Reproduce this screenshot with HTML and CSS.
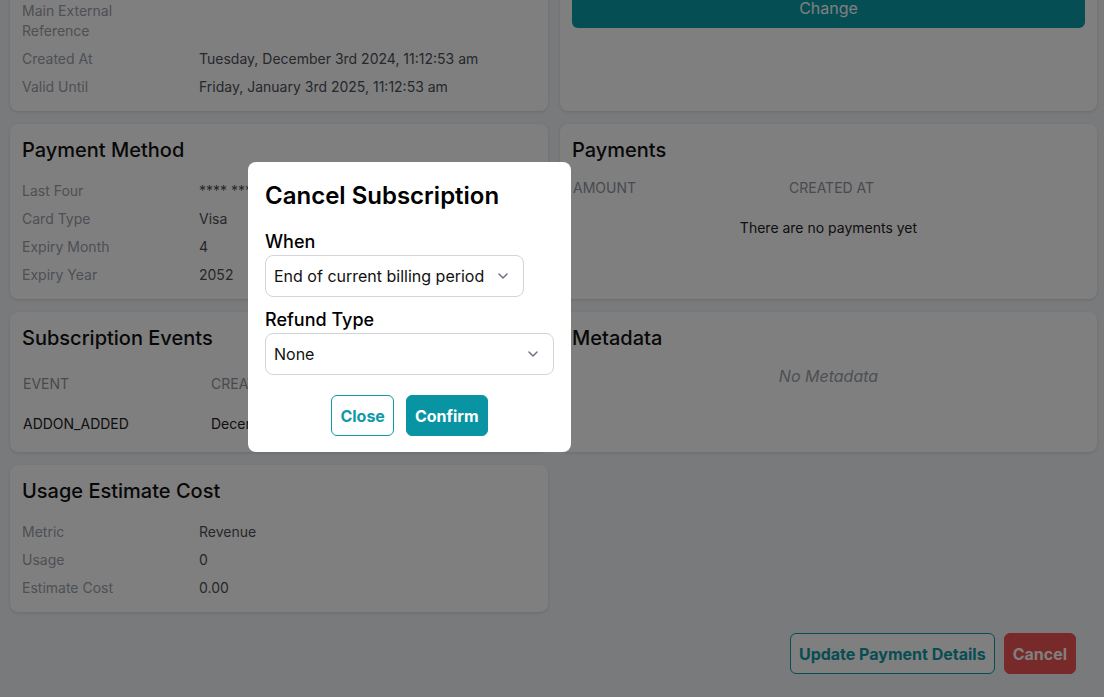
FILE: index.html
```html
<!DOCTYPE html>
<html lang="en">
<head>
<meta charset="utf-8">
<title>Subscription</title>
<link rel="stylesheet" href="styles.css">
</head>
<body>
<div class="page">
  <div class="grid">
    <section class="card">
      <h2 class="card-title">Subscription Details</h2>
      <div class="info">
        <div class="label">Customer</div><div class="value">Acme Inc.</div>
        <div class="label">Plan</div><div class="value">Pro</div>
        <div class="label">Status</div><div class="value">Active</div>
        <div class="label">Main External Reference</div><div class="value"></div>
        <div class="label">Created At</div><div class="value">Tuesday, December 3rd 2024, 11:12:53 am</div>
        <div class="label">Valid Until</div><div class="value">Friday, January 3rd 2025, 11:12:53 am</div>
      </div>
    </section>
    <section class="card">
      <h2 class="card-title">Plan</h2>
      <div class="info">
        <div class="label">Plan Name</div><div class="value">Pro</div>
        <div class="label">Price</div><div class="value">10.00</div>
      </div>
      <button class="btn-change">Change</button>
    </section>

    <section class="card">
      <h2 class="card-title">Payment Method</h2>
      <div class="info">
        <div class="label">Last Four</div><div class="value">**** **** **** 4242</div>
        <div class="label">Card Type</div><div class="value">Visa</div>
        <div class="label">Expiry Month</div><div class="value">4</div>
        <div class="label">Expiry Year</div><div class="value">2052</div>
      </div>
    </section>
    <section class="card">
      <h2 class="card-title">Payments</h2>
      <table class="table table-payments">
        <thead><tr><th class="col-amount">Amount</th><th>Created At</th></tr></thead>
        <tbody><tr><td colspan="2" class="empty">There are no payments yet</td></tr></tbody>
      </table>
    </section>

    <section class="card">
      <h2 class="card-title">Subscription Events</h2>
      <table class="table table-events">
        <thead><tr><th class="col-event">Event</th><th>Created At</th></tr></thead>
        <tbody><tr><td>ADDON_ADDED</td><td>December 3rd 2024, 11:12:53 am</td></tr></tbody>
      </table>
    </section>
    <section class="card">
      <h2 class="card-title">Metadata</h2>
      <p class="no-meta">No Metadata</p>
    </section>

    <section class="card">
      <h2 class="card-title">Usage Estimate Cost</h2>
      <div class="info">
        <div class="label">Metric</div><div class="value">Revenue</div>
        <div class="label">Usage</div><div class="value">0</div>
        <div class="label">Estimate Cost</div><div class="value">0.00</div>
      </div>
    </section>
  </div>

  <div class="actions">
    <button class="btn btn-outline">Update Payment Details</button>
    <button class="btn btn-danger">Cancel</button>
  </div>
</div>

<div class="overlay"></div>
<div class="modal">
  <h3 class="modal-title">Cancel Subscription</h3>
  <div class="field-label">When</div>
  <div class="select select-fit">
    <span>End of current billing period</span>
    <svg class="chev" width="20" height="20" viewBox="0 0 20 20"><path d="M6 8l4 4 4-4" fill="none" stroke="#6b7280" stroke-width="1.5" stroke-linecap="round" stroke-linejoin="round"/></svg>
  </div>
  <div class="field-label field-label-2">Refund Type</div>
  <div class="select select-full">
    <span>None</span>
    <svg class="chev" width="20" height="20" viewBox="0 0 20 20"><path d="M6 8l4 4 4-4" fill="none" stroke="#6b7280" stroke-width="1.5" stroke-linecap="round" stroke-linejoin="round"/></svg>
  </div>
  <div class="modal-actions">
    <button class="btn btn-outline btn-sm">Close</button>
    <button class="btn btn-primary btn-sm">Confirm</button>
  </div>
</div>
</body>
</html>
```

FILE: styles.css
```css
* { box-sizing: border-box; }
html, body { margin: 0; padding: 0; }
body {
  font-family: Inter, "Noto Sans", "Liberation Sans", sans-serif;
  background: #f3f4f6;
  color: #111827;
  overflow: hidden;
  height: 697px;
}
.page {
  margin-top: -140px;
  padding: 0 7px 20px 10px;
}
.grid {
  display: grid;
  grid-template-columns: 538px 537px;
  gap: 13px 12px;
}
.card {
  background: #ffffff;
  border-radius: 8px;
  box-shadow: 0 1px 3px rgba(0,0,0,0.12);
  padding: 12px 12px 14px;
}
.card-title {
  margin: 0 0 17px;
  font-size: 20px;
  line-height: 28px;
  font-weight: 500;
  color: #111111;
}
.info {
  display: grid;
  grid-template-columns: 160px 1fr;
  column-gap: 17px;
  row-gap: 8px;
  font-size: 14px;
  line-height: 20px;
}
.label { color: #9aa0aa; }
.value { color: #4b5058; }
.btn-change {
  display: block;
  width: 100%;
  height: 40px;
  margin-top: 23px;
  border: 0;
  border-radius: 6px;
  background: #0a9ca8;
  color: #ffffff;
  font-family: inherit;
  font-size: 16px;
  font-weight: 400;
}
.table {
  width: 100%;
  border-collapse: collapse;
  font-size: 14px;
  line-height: 20px;
  text-align: left;
}
.table th {
  font-weight: 400;
  text-transform: uppercase;
  color: #8f949d;
  padding: 0;
}
.table td { padding: 0; color: #303338; }
.table-payments { margin-top: -3px; }
.table-payments th { padding-bottom: 10px; }
.table-payments th:first-child { padding-left: 1px; }
.col-amount { width: 217px; }
.table-payments .empty { text-align: center; padding-top: 10px; color: #1f2023; }
.table-events th { padding: 5px 0 8px 1px; }
.table-events td { padding: 12px 0 4px 1px; color: #1f2023; }
.col-event { width: 188px; }
.no-meta {
  margin: -5px 0 0;
  text-align: center;
  font-style: italic;
  font-size: 16px;
  line-height: 24px;
  color: #9aa0aa;
}
.actions {
  display: flex;
  justify-content: flex-end;
  gap: 9px;
  margin-top: 21px;
  padding-right: 21px;
}
.btn {
  height: 41px;
  padding: 0 8px;
  border-radius: 6px;
  font-family: inherit;
  font-size: 16px;
  font-weight: 700;
  border: 1px solid transparent;
  background: none;
}
.btn-outline {
  border-color: #0a9ca8;
  color: #0f9aa6;
  background: #ffffff;
}
.btn-danger {
  background: #f05252;
  border-color: #f05252;
  color: #ffffff;
  padding: 0 8px;
}
.btn-primary {
  background: #0894a2;
  border-color: #0894a2;
  color: #ffffff;
}
.btn-sm { padding: 0 8px; }
.overlay {
  position: fixed;
  inset: 0;
  background: rgba(0,0,0,0.5);
}
.modal {
  position: fixed;
  left: 248px;
  top: 162px;
  width: 323px;
  background: #ffffff;
  border-radius: 8px;
  padding: 18px 17px 16px;
}
.modal-title {
  margin: 0 0 18px;
  font-size: 24px;
  line-height: 32px;
  font-weight: 600;
  color: #000000;
}
.field-label {
  font-size: 18px;
  line-height: 24px;
  font-weight: 500;
  color: #000000;
  margin-bottom: 1px;
}
.field-label-2 { margin-top: 11px; }
.select {
  display: flex;
  align-items: center;
  justify-content: space-between;
  height: 42px;
  border: 1px solid #d1d5db;
  border-radius: 8px;
  padding: 0 10px 0 8px;
  font-size: 16px;
  color: #111111;
  background: #ffffff;
}
.select-fit { width: 259px; }
.select-full { width: 100%; }
.chev { flex: none; }
.modal-actions {
  display: flex;
  justify-content: center;
  gap: 12px;
  margin-top: 20px;
}
```
